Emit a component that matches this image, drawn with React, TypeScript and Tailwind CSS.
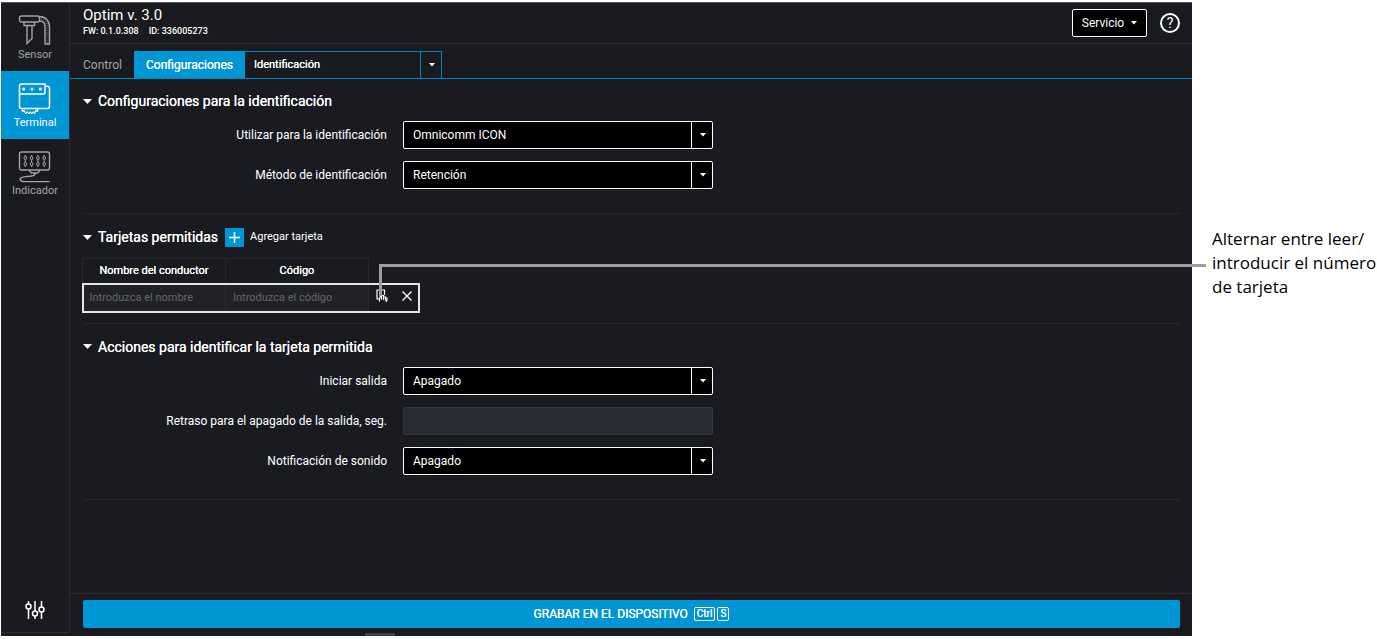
import { useState } from "react";
import type { ReactNode } from "react";

function Caret({ className = "" }: { className?: string }) {
  return (
    <svg className={className} width="6" height="4" viewBox="0 0 6 4" fill="currentColor" aria-hidden="true">
      <path d="M0 0h6L3 3.6z" />
    </svg>
  );
}

function SensorIcon() {
  return (
    <svg width="34" height="32" viewBox="0 0 34 32" fill="none" stroke="currentColor" strokeWidth="1.4" aria-hidden="true">
      <rect x="1.5" y="1" width="20" height="6" rx="2" />
      <path d="M6 7v3.5h10.5V7M9 10.5v18l5-5v-13" />
      <path d="M21.5 1.5c6 0 10 4.5 10 10.5v17H27V12c0-4-2-6-5.5-6" />
      <path d="M29.300 28V12c0-5-3-8-8-8.300" strokeWidth="2.500" strokeDasharray="0.800 1.600" opacity="0.500" />
    </svg>
  );
}

function TerminalIcon() {
  return (
    <svg width="34" height="32" viewBox="0 0 34 32" fill="none" stroke="currentColor" strokeWidth="1.5" aria-hidden="true">
      <path d="M27 3.200h2.500a2 2 0 0 1 2 2v18.300a2 2 0 0 1-2 2h-26a2 2 0 0 1-2-2V3a2 2 0 0 1 2-2H27v8a2 2 0 0 1-2 2H1.500" />
      <path d="M4.500 25.500V28H7M17 28h2.500v-2.500" />
      <path d="M7 28v2.500h1.500V29h1.500v1.500h1.500V29h1.500v1.500h1.500V29h1.500v1.500H17V28" strokeWidth="0.900" />
      <g fill="currentColor" stroke="none">
        <circle cx="5.700" cy="6" r="1.500" />
        <circle cx="14" cy="6" r="1.500" />
        <circle cx="22.300" cy="6" r="1.500" />
      </g>
    </svg>
  );
}

function IndicatorIcon() {
  return (
    <svg width="34" height="32" viewBox="0 0 34 32" fill="none" stroke="currentColor" strokeWidth="1.4" aria-hidden="true">
      <rect x="1.500" y="1" width="30" height="18" rx="2" />
      {[7.3, 13.6, 19.9, 26.2].map((x) => (
        <g key={x} strokeWidth="1">
          <ellipse cx={x} cy="7" rx="1.300" ry="1.700" />
          <ellipse cx={x} cy="13" rx="1.300" ry="1.700" />
          <path d={`M${x} 4v1.300M${x} 8.700v2.600M${x} 14.700V16`} />
        </g>
      ))}
      <path d="M11.500 19v1l2 2h6l2-2v-1M17 22c0 2.500-1 3-5 3.200-6 .3-10 .8-10 3 0 2 2 2.400 5 2.400h24.500" />
    </svg>
  );
}

const devices = [
  { name: "Sensor", icon: <SensorIcon /> },
  { name: "Terminal", icon: <TerminalIcon /> },
  { name: "Indicador", icon: <IndicatorIcon /> },
];

function Sidebar() {
  const [active, setActive] = useState("Terminal");

  return (
    <nav className="flex w-[69px] shrink-0 flex-col border-r border-b border-[#2b2c31]">
      {devices.map(({ name, icon }) => (
        <button
          key={name}
          type="button"
          onClick={() => setActive(name)}
          className={`flex h-17 flex-col items-center pt-3 text-[11px] leading-4 ${
            active === name ? "bg-[#0095d3] text-white" : "text-[#a3a4a6]"
          }`}
        >
          {icon}
          <span>{name}</span>
        </button>
      ))}
      <button type="button" aria-label="Ajustes" className="mt-auto flex h-11 items-center justify-center text-white">
        <svg width="20" height="18" viewBox="0 0 20 18" fill="none" stroke="currentColor" strokeWidth="1.5">
          <path d="M3.500 0v3M3.500 8v10M10 0v10M10 15v3M16.500 0v6M16.500 11v7" />
          <circle cx="3.500" cy="5.500" r="2.500" />
          <circle cx="10" cy="12.500" r="2.500" />
          <circle cx="16.500" cy="8.500" r="2.500" />
        </svg>
      </button>
    </nav>
  );
}

function Section({ title, action, children }: { title: string; action?: ReactNode; children: ReactNode }) {
  return (
    <section className="border-b border-[#26272c] pt-[11px] first:pt-2.5">
      <div className="flex h-6 items-center">
        <h2 className="text-sm text-white">
          <button type="button" className="flex items-center gap-1.5 [text-shadow:0_0_0_currentColor]">
            <svg width="9" height="5" viewBox="0 0 9 5" fill="currentColor" aria-hidden="true">
              <path d="M0 0h9L4.500 5z" />
            </svg>
            {title}
          </button>
        </h2>
        {action}
      </div>
      {children}
    </section>
  );
}

function Field({ id, label, children }: { id: string; label: string; children: ReactNode }) {
  return (
    <div className="flex items-center gap-4">
      <label htmlFor={id} className="w-[304px] text-right text-xs text-white">
        {label}
      </label>
      {children}
    </div>
  );
}

function SelectField({ id, label, options }: { id: string; label: string; options: string[] }) {
  return (
    <Field id={id} label={label}>
      <div className="relative h-7 w-[310px]">
        <select
          id={id}
          className="h-full w-full appearance-none rounded-xs border border-white bg-black pl-[9px] text-xs text-white"
        >
          {options.map((option) => (
            <option key={option}>{option}</option>
          ))}
        </select>
        <span className="pointer-events-none absolute inset-y-0 right-0 flex w-[22px] items-center justify-center border-l border-white text-white">
          <Caret />
        </span>
      </div>
    </Field>
  );
}

function CardsTable() {
  return (
    <table className="-ml-px border-collapse text-[11px]">
      <thead>
        <tr className="h-[25px] text-white">
          <th className="w-[143px] border border-[#26272c] font-normal [text-shadow:0_0_0_currentColor]">
            Nombre del conductor
          </th>
          <th className="w-[143px] border border-[#26272c] font-normal [text-shadow:0_0_0_currentColor]">Código</th>
          <td className="w-[50px]" />
        </tr>
      </thead>
      <tbody>
        <tr className="h-7 outline-2 -outline-offset-1 outline-[#e6e6e6]">
          <td className="border-r border-[#2b2c31] bg-[#212226]">
            <input
              aria-label="Nombre del conductor"
              placeholder="Introduzca el nombre"
              className="w-full px-[7px] placeholder:text-[#66676b]"
            />
          </td>
          <td className="border-r border-[#2b2c31] bg-[#212226]">
            <input
              aria-label="Código"
              placeholder="Introduzca el código"
              className="w-full px-[7px] placeholder:text-[#66676b]"
            />
          </td>
          <td>
            <div className="flex items-center justify-center gap-3.5 pb-1 text-white">
              <button type="button" aria-label="Leer tarjeta">
                <svg width="12" height="13" viewBox="0 0 12 13" fill="none" stroke="currentColor" strokeWidth="1.200">
                  <path d="M3 10H1V1h7.500v5M3.500 12.500V9.500L5.500 5v5.500M5.500 6.500h2V11M7.500 8h2v3.500M9.500 9h1.500v2l-1 2" />
                </svg>
              </button>
              <button type="button" aria-label="Eliminar tarjeta">
                <svg width="10" height="10" viewBox="0 0 10 10" fill="none" stroke="currentColor" strokeWidth="1.300">
                  <path d="M0.500 0.500l9 9M9.500 0.500l-9 9" />
                </svg>
              </button>
            </div>
          </td>
        </tr>
      </tbody>
    </table>
  );
}

export default function App() {
  return (
    <div className="flex min-h-screen bg-white pt-0.5 pb-[3px] pl-px">
      <div className="relative flex flex-1 flex-col border-t border-[#55565a] bg-[#1a1b20] font-['Roboto',sans-serif]">
        <div className="flex flex-1">
          <Sidebar />

          <div className="flex flex-1 flex-col">
            <header className="flex h-[41px] items-center justify-between border-b border-[#2b2c31] pr-3 pl-[13px]">
              <div className="text-white">
                <h1 className="text-[15px] leading-4">Optim v. 3.0</h1>
                <p className="flex gap-2.5 text-[9px] leading-4 font-medium">
                  <span>FW: 0.1.0.308</span>
                  <span>ID: 336005273</span>
                </p>
              </div>
              <div className="flex items-center gap-[13px] text-white">
                <button
                  type="button"
                  className="flex h-7 w-[75px] items-center justify-center gap-[7px] rounded-xs border border-white bg-black text-xs"
                >
                  Servicio
                  <Caret />
                </button>
                <button
                  type="button"
                  aria-label="Ayuda"
                  className="flex h-5 w-5 items-center justify-center rounded-full border-2 border-white text-sm"
                >
                  ?
                </button>
              </div>
            </header>

            <div className="mt-[7px] flex h-7 items-stretch border-b border-[#0086be] pl-[13px] text-xs">
              <button type="button" className="w-[51px] text-left text-[#a3a4a6]">
                Control
              </button>
              <button type="button" className="w-[111px] bg-[#0095d3] text-white [text-shadow:0_0_0_currentColor]">
                Configuraciones
              </button>
              <div className="relative w-[197px]">
                <select
                  aria-label="Configuraciones"
                  className="h-full w-full appearance-none border-t border-r border-[#0086be] pl-[9px] text-[11px] text-white [text-shadow:0_0_0_currentColor]"
                >
                  <option>Identificación</option>
                </select>
                <span className="pointer-events-none absolute inset-y-0 right-0 flex w-[22px] items-center justify-center border-l border-[#0086be] text-white">
                  <Caret />
                </span>
              </div>
            </div>

            <main className="flex-1 pr-3 pl-[13px]">
              <Section title="Configuraciones para la identificación">
                <div className="mt-2 mb-6 flex flex-col gap-3">
                  <SelectField id="device" label="Utilizar para la identificación" options={["Omnicomm ICON"]} />
                  <SelectField id="method" label="Método de identificación" options={["Retención"]} />
                </div>
              </Section>

              <Section
                title="Tarjetas permitidas"
                action={
                  <button type="button" className="ml-[7px] flex items-center gap-1.5 text-[11px] text-white">
                    <span className="flex h-[19px] w-[19px] items-center justify-center bg-[#0095d3]">
                      <svg width="11" height="11" viewBox="0 0 11 11" stroke="currentColor" strokeWidth="1.500" aria-hidden="true">
                        <path d="M5.500 0v11M0 5.500h11" />
                      </svg>
                    </span>
                    Agregar tarjeta
                  </button>
                }
              >
                <div className="mt-[9px] mb-[11px]">
                  <CardsTable />
                </div>
              </Section>

              <Section title="Acciones para identificar la tarjeta permitida">
                <div className="mt-2 mb-6 flex flex-col gap-3">
                  <SelectField id="output" label="Iniciar salida" options={["Apagado"]} />
                  <Field id="delay" label="Retraso para el apagado de la salida, seg.">
                    <input
                      id="delay"
                      disabled
                      className="h-7 w-[310px] rounded-xs border border-[#36373b] bg-[#2a2c35] px-2.5 text-xs text-white"
                    />
                  </Field>
                  <SelectField id="sound" label="Notificación de sonido" options={["Apagado"]} />
                </div>
              </Section>
            </main>

            <footer className="border-t border-[#2b2c31] pt-1.5 pr-3 pb-[5px] pl-[13px]">
              <button
                type="button"
                className="flex h-7 w-full items-center justify-center gap-1.5 rounded-xs bg-[#0095d3] text-xs text-white [text-shadow:0_0_0_currentColor]"
              >
                GRABAR EN EL DISPOSITIVO
                <span className="flex gap-0.5 text-[10px] leading-3">
                  <kbd className="rounded-xs border border-white px-0.5 font-['Roboto',sans-serif]">Ctrl</kbd>
                  <kbd className="rounded-xs border border-white px-0.5 font-['Roboto',sans-serif]">S</kbd>
                </span>
              </button>
            </footer>
          </div>
        </div>

        <div className="h-[3px] bg-[#1b1b1c]">
          <div className="ml-[364px] h-full w-[30px] bg-[#404042]" />
        </div>

        {/* callout line from the read toggle to the note */}
        <div className="pointer-events-none absolute top-[261px] -right-3.5 left-[378px] h-8 border-t-3 border-l-3 border-[#9c9d9d]" />
      </div>

      <aside className="w-[185px] shrink-0 pt-[225px] pl-5 font-['Open_Sans',sans-serif] text-[17px] leading-6 text-black">
        Alternar entre leer/
        <br />
        introducir el número
        <br />
        de tarjeta
      </aside>
    </div>
  );
}
